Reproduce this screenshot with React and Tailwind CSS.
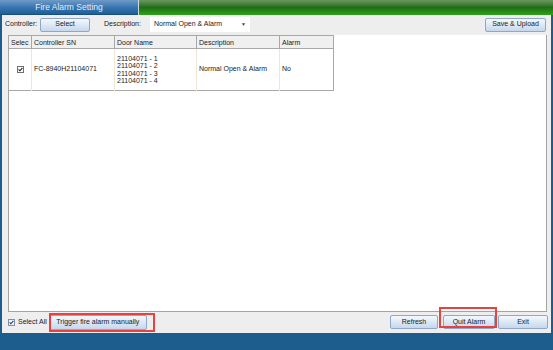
import React from "react";

const font = { fontFamily: '"Liberation Sans", Arial, sans-serif' };

function Btn({ children, className = "" }) {
  return (
    <div
      className={`flex items-center justify-center h-[14px] rounded-[2px] border border-[#8ea8c6] bg-gradient-to-b from-[#f4f8fd] via-[#dde8f5] to-[#c5d7ee] text-[7px] text-[#1a1a1a] ${className}`}
    >
      {children}
    </div>
  );
}

function Check() {
  return (
    <div className="w-[7px] h-[7px] border border-[#6f6f6f] bg-white flex items-center justify-center">
      <svg width="5" height="5" viewBox="0 0 5 5">
        <path d="M0.6 2.4 L1.9 3.8 L4.4 0.9" stroke="#222" strokeWidth="1.1" fill="none" />
      </svg>
    </div>
  );
}

const doors = ["21104071 - 1", "21104071 - 2", "21104071 - 3", "21104071 - 4"];

export default function App() {
  return (
    <div className="relative w-[553px] h-[350px] flex flex-col bg-[#eeeeee] overflow-hidden" style={font}>
      {/* title bar */}
      <div className="h-[15px] flex">
        <div className="w-[138px] flex items-center justify-center bg-gradient-to-b from-[#6f9bc6] via-[#3a77b2] to-[#1e5f98] border-b border-[#194f80] text-[8.5px] text-[#e6eef7]">
          Fire Alarm Setting
        </div>
        <div className="w-px bg-[#c9d9e6]" />
        <div className="flex-1 bg-gradient-to-b from-[#6a9760] via-[#1f6e12] to-[#2fa31c]" />
      </div>

      {/* main */}
      <div className="flex-1 flex flex-col border-l-2 border-r-2 border-[#1c5d8e] pt-[2px]">
        {/* toolbar */}
        <div className="h-[15px] flex items-center text-[7px] text-[#1a1a1a]">
          <span className="ml-[3px] w-[35px]">Controller:</span>
          <Btn className="w-[50px]">Select</Btn>
          <span className="ml-[14px] w-[46px]">Description:</span>
          <div className="w-[100px] h-[15px] bg-white flex items-center justify-between px-[4px]">
            <span>Normal Open &amp; Alarm</span>
            <span className="text-[5px] text-[#444]">▼</span>
          </div>
          <div className="flex-1" />
          <Btn className="w-[61px] mr-[5px]">Save &amp; Upload</Btn>
        </div>

        {/* grid */}
        <div className="mt-[3px] ml-[6px] mr-[4px] h-[277px] bg-white border-r border-b border-[#a3a3a3] border-l border-l-[#a3a3a3]">
          <table className="border-collapse text-[7px] text-[#1a1a1a] -ml-px" style={{ tableLayout: "fixed" }}>
            <colgroup>
              <col style={{ width: 23 }} />
              <col style={{ width: 83 }} />
              <col style={{ width: 82 }} />
              <col style={{ width: 83 }} />
              <col style={{ width: 54 }} />
            </colgroup>
            <thead>
              <tr className="h-[13px] bg-[#f0f0f0]">
                {["Selec", "Controller SN", "Door Name", "Description", "Alarm"].map((h) => (
                  <th key={h} className="font-normal text-left pl-[2px] border border-[#a8a8a8] leading-none">
                    {h}
                  </th>
                ))}
              </tr>
            </thead>
            <tbody>
              <tr className="h-[42px] border-b border-[#a8a8a8]">
                <td className="border-r border-[#efe6d6] border-l border-l-[#a8a8a8]">
                  <div className="flex justify-center">
                    <Check />
                  </div>
                </td>
                <td className="pl-[2px] border-r border-[#efe6d6]">FC-8940H21104071</td>
                <td className="pl-[2px] border-r border-[#efe6d6] leading-[7.5px]">
                  {doors.map((d) => (
                    <div key={d}>{d}</div>
                  ))}
                </td>
                <td className="pl-[2px] border-r border-[#efe6d6]">Normal Open &amp; Alarm</td>
                <td className="pl-[2px] border-r border-[#a8a8a8]">No</td>
              </tr>
            </tbody>
          </table>
        </div>

        {/* footer */}
        <div className="flex items-start pt-[3px] text-[7px] text-[#1a1a1a]">
          <div className="ml-[6px] mt-[2px] flex items-center">
            <div className="w-[7px] h-[7px] border border-[#7b8fae] bg-[#eef2f8] flex items-center justify-center">
              <svg width="5" height="5" viewBox="0 0 5 5">
                <path d="M0.6 2.4 L1.9 3.8 L4.4 0.9" stroke="#2a3f78" strokeWidth="1.1" fill="none" />
              </svg>
            </div>
            <span className="ml-[3px]">Select All</span>
          </div>
          <Btn className="ml-[2px] w-[98px] h-[15px]">Trigger fire alarm manually</Btn>
          <div className="flex-1" />
          <Btn className="w-[48px]">Refresh</Btn>
          <Btn className="ml-[5px] w-[52px]">Quit Alarm</Btn>
          <Btn className="ml-[3px] w-[50px] mr-[3px]">Exit</Btn>
        </div>
      </div>

      {/* bottom bar */}
      <div className="h-[17px] bg-[#1c5d8e]" />

      {/* annotations */}
      <div className="absolute left-[49px] top-[313px] w-[106px] h-[19px] border-2 border-[#e8413f]" />
      <div className="absolute left-[439px] top-[307px] w-[58px] h-[21px] border-2 border-[#e8413f]" />
    </div>
  );
}
